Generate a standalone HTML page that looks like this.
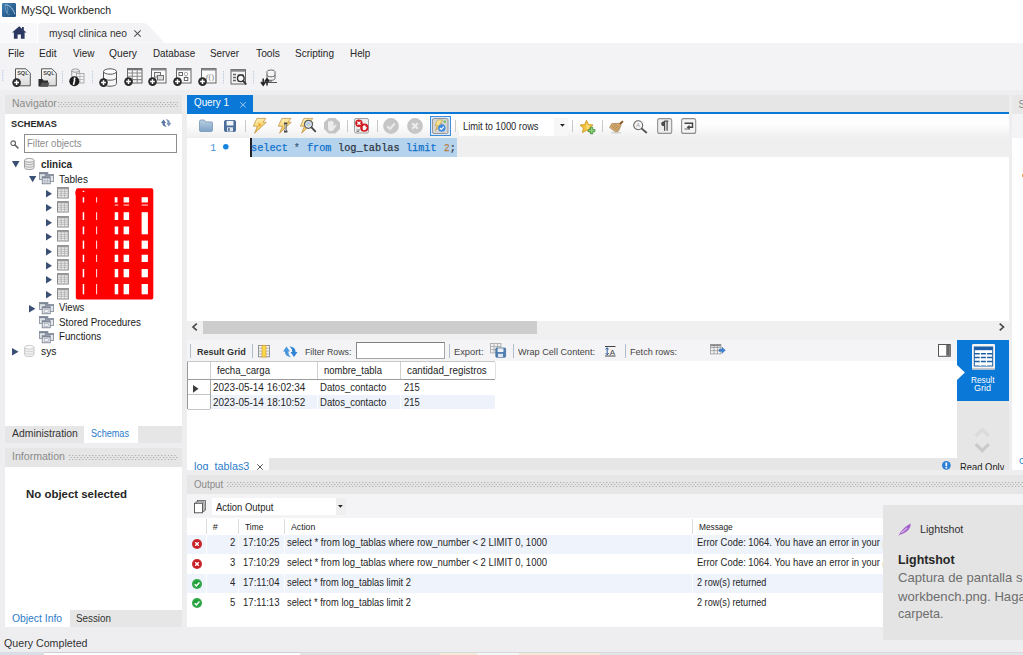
<!DOCTYPE html>
<html>
<head>
<meta charset="utf-8">
<title>MySQL Workbench</title>
<style>
*{box-sizing:border-box;margin:0;padding:0}
html,body{width:1023px;height:655px;overflow:hidden;background:#fff}
body{position:relative;font-family:"Liberation Sans",sans-serif;font-size:11px;color:#1a1a1a}
.a{position:absolute}
.t{position:absolute;white-space:pre;line-height:20px;transform-origin:0 0}
svg{position:absolute;overflow:visible}
.dots{position:absolute;background-image:radial-gradient(circle at 0.6px 0.6px,#a6a6a6 0.45px,transparent 0.75px),radial-gradient(circle at 0.6px 0.6px,#a6a6a6 0.45px,transparent 0.75px);background-size:3.3px 4px;background-position:0 0,1.65px 2px}
</style>
</head>
<body>
<div class="a" style="left:0px;top:0px;width:1023px;height:23.4px;background:#fff;"></div>
<svg style="left:2px;top:3px" width="14" height="14" viewBox="0 0 14 14"><defs><linearGradient id="lg1" x1="0" y1="0" x2="1" y2="1"><stop offset="0" stop-color="#3c7fb3"/><stop offset="1" stop-color="#1f4f7c"/></linearGradient></defs><rect x="0" y="0" width="14" height="14" rx="1.2" fill="url(#lg1)"/><path d="M3.300 1.700C8 2 11.200 6 12.900 11.300" fill="none" stroke="#c3d6e6" stroke-width="1" stroke-opacity=".85"/><path d="M3.300 1.700C2.800 4.500 3.500 7.500 5 10C5.600 11.300 6.800 12 7.600 11.300M5.200 3.500C6 5.500 6 8 5 10" fill="none" stroke="#aac4da" stroke-width=".8" stroke-opacity=".6"/></svg>
<div class="a" style="left:0px;top:23.4px;width:1023px;height:19.6px;background:#fff;"></div>
<svg style="left:0px;top:23.4px" width="170" height="19.6" viewBox="0 0 170 19.6"><path d="M0 0H33.500Q37 0 37 3.500V19.600H0Z" fill="#f8f8fa"/><path d="M38 19.600V3.500Q38 0 41.500 0H143Q146 0 147.800 1.800L164.500 19.600Z" fill="#f3f3f5"/></svg>
<svg style="left:11.5px;top:25.6px" width="14.5" height="12.8" viewBox="0 0 14.5 12.8"><path d="M7.250 0.300L0 6.600H1.900V12.800H5.600V8.400H8.900V12.800H12.600V6.600H14.500L11.800 4.200V1H10V2.700Z" fill="#2a3760"/></svg>
<svg style="left:134px;top:30.4px" width="7" height="7" viewBox="0 0 7 7"><path d="M0.300 0.300L6.700 6.700M6.700 0.300L0.300 6.700" stroke="#555" stroke-width="1.100" fill="none"/></svg>
<div class="a" style="left:0px;top:43px;width:1023px;height:47.3px;background:#f3f3f5;"></div>
<div class="a" style="left:0px;top:90.3px;width:1023px;height:564.7px;background:#eeeef1;"></div>
<svg style="left:2.2px;top:70px" width="2" height="12" viewBox="0 0 2 12"><rect x="0" y="0" width="1.300" height="1.200" fill="#b9cde6"/><rect x="0" y="2.4" width="1.300" height="1.200" fill="#b9cde6"/><rect x="0" y="4.8" width="1.300" height="1.200" fill="#b9cde6"/><rect x="0" y="7.2" width="1.300" height="1.200" fill="#b9cde6"/><rect x="0" y="9.6" width="1.300" height="1.200" fill="#b9cde6"/></svg>
<svg style="left:12px;top:67.5px" width="19" height="19" viewBox="0 0 19 19"><defs><linearGradient id="dg" x1="0" y1="0" x2="0" y2="1"><stop offset="0" stop-color="#fdfdfd"/><stop offset="1" stop-color="#d9d9d9"/></linearGradient></defs><path d="M3.500 .8H14L18.300 5.200V17.800H3.500Z" fill="url(#dg)" stroke="#555" stroke-width="1"/><text x="5.200" y="7" font-size="5.500" font-weight="bold" fill="#444" font-family="Liberation Sans">SQL</text><circle cx="4.6" cy="14.6" r="4.3" fill="#2b2b2b"/><path d="M2.1999999999999997 14.6H7.0M4.6 12.2V17.0" stroke="#fff" stroke-width="1.500"/></svg>
<svg style="left:38px;top:67.5px" width="19" height="19" viewBox="0 0 19 19"><path d="M3.500 .8H14L18.300 5.200V17.800H3.500Z" fill="url(#dg)" stroke="#555" stroke-width="1"/><text x="5.200" y="7" font-size="5.500" font-weight="bold" fill="#444" font-family="Liberation Sans">SQL</text><path d="M0.500 18.500V11H4.500L5.500 12.500H10V18.500Z" fill="#2b2b2b"/><path d="M2 18.500L3.500 14.500H11.500L10 18.500Z" fill="#555"/></svg>
<svg style="left:62.3px;top:71px" width="1" height="12" viewBox="0 0 1 12"><rect x="0" y="0" width="1" height="1.200" fill="#b9c9dd"/><rect x="0" y="2.2" width="1" height="1.200" fill="#b9c9dd"/><rect x="0" y="4.4" width="1" height="1.200" fill="#b9c9dd"/><rect x="0" y="6.6" width="1" height="1.200" fill="#b9c9dd"/><rect x="0" y="8.8" width="1" height="1.200" fill="#b9c9dd"/><rect x="0" y="11" width="1" height="1.200" fill="#b9c9dd"/></svg>
<svg style="left:69px;top:67.5px" width="16" height="19" viewBox="0 0 16 19"><ellipse cx="6.500" cy="2.600" rx="3.800" ry="1.700" fill="#e8e8e8" stroke="#8a8a8a" stroke-width=".8"/><path d="M2.700 2.600V8.500M10.300 2.600V8.500" stroke="#8a8a8a" stroke-width=".8"/><rect x="7.500" y="5.500" width="7.500" height="9.500" fill="#f4f4f4" stroke="#9a9a9a" stroke-width=".8"/><path d="M7.500 8.500H15M7.500 11.500H15M11 5.500V15" stroke="#aaa" stroke-width=".7"/><circle cx="5.300" cy="13.300" r="5" fill="#1f1f1f"/><path d="M5.800 10.200l-.5 1.200M5.600 12.300l-1 4" stroke="#fff" stroke-width="1.600" stroke-linecap="round"/></svg>
<svg style="left:92px;top:71px" width="1" height="12" viewBox="0 0 1 12"><rect x="0" y="0" width="1" height="1.200" fill="#b9c9dd"/><rect x="0" y="2.2" width="1" height="1.200" fill="#b9c9dd"/><rect x="0" y="4.4" width="1" height="1.200" fill="#b9c9dd"/><rect x="0" y="6.6" width="1" height="1.200" fill="#b9c9dd"/><rect x="0" y="8.8" width="1" height="1.200" fill="#b9c9dd"/><rect x="0" y="11" width="1" height="1.200" fill="#b9c9dd"/></svg>
<svg style="left:98.5px;top:67.5px" width="19" height="19" viewBox="0 0 19 19"><path d="M4.500 3.500V15.500C4.500 17.200 7.500 18.200 11 18.200S17.500 17.200 17.500 15.500V3.500" fill="#f6f6f6" stroke="#555" stroke-width="1"/><ellipse cx="11" cy="3.500" rx="6.500" ry="2.700" fill="#fff" stroke="#555" stroke-width="1"/><path d="M4.500 9.500C4.500 11.200 7.500 12.200 11 12.200S17.500 11.200 17.500 9.500" fill="none" stroke="#555" stroke-width="1"/><circle cx="4.5" cy="14.6" r="4.3" fill="#2b2b2b"/><path d="M2.1 14.6H6.9M4.5 12.2V17.0" stroke="#fff" stroke-width="1.500"/></svg>
<svg style="left:123.6px;top:67.2px" width="19" height="19" viewBox="0 0 19 19"><rect x="3.500" y="1.500" width="14.500" height="14.500" fill="#fafafa" stroke="#666" stroke-width="1"/><rect x="3.500" y="1.500" width="14.500" height="1.800" fill="#777"/><path d="M3.500 6H18M3.500 9.300H18M3.500 12.600H18M8.300 3.300V16M13.200 3.300V16" stroke="#8a8a8a" stroke-width="1.100"/><circle cx="4.5" cy="14.6" r="4.3" fill="#2b2b2b"/><path d="M2.1 14.6H6.9M4.5 12.2V17.0" stroke="#fff" stroke-width="1.500"/></svg>
<svg style="left:147.9px;top:67.2px" width="19" height="19" viewBox="0 0 19 19"><rect x="3.500" y="1.500" width="14.500" height="14.500" fill="#fafafa" stroke="#666" stroke-width="1"/><rect x="3.500" y="1.500" width="14.500" height="2" fill="#888"/><rect x="6.500" y="5.500" width="6" height="4.500" fill="#eee" stroke="#666" stroke-width=".9"/><rect x="9.500" y="8.500" width="6" height="4.500" fill="#ddd" stroke="#666" stroke-width=".9"/><circle cx="4.5" cy="14.6" r="4.3" fill="#2b2b2b"/><path d="M2.1 14.6H6.9M4.5 12.2V17.0" stroke="#fff" stroke-width="1.500"/></svg>
<svg style="left:172.9px;top:67.2px" width="19" height="19" viewBox="0 0 19 19"><rect x="3.500" y="1.500" width="14.500" height="14.500" fill="#fafafa" stroke="#666" stroke-width="1"/><rect x="3.500" y="1.500" width="14.500" height="2" fill="#888"/><rect x="6" y="5.500" width="3.500" height="3" fill="#fff" stroke="#555" stroke-width=".9"/><circle cx="13" cy="7" r="1.700" fill="#fff" stroke="#999" stroke-width=".8"/><rect x="11.300" y="10.500" width="3.500" height="3" fill="#fff" stroke="#555" stroke-width=".9"/><path d="M13 8.700V10.500" stroke="#999" stroke-width=".7"/><circle cx="4.5" cy="14.6" r="4.3" fill="#2b2b2b"/><path d="M2.1 14.6H6.9M4.5 12.2V17.0" stroke="#fff" stroke-width="1.500"/></svg>
<svg style="left:197.9px;top:67.2px" width="19" height="19" viewBox="0 0 19 19"><rect x="3.500" y="1.500" width="14.500" height="14.500" fill="#fafafa" stroke="#666" stroke-width="1"/><rect x="3.500" y="1.500" width="14.500" height="2" fill="#888"/><text x="7.500" y="13" font-size="9" fill="#858585" font-family="Liberation Serif" font-style="italic">f</text><text x="10.500" y="13" font-size="8.500" fill="#858585" font-family="Liberation Serif">()</text><circle cx="4.5" cy="14.6" r="4.3" fill="#2b2b2b"/><path d="M2.1 14.6H6.9M4.5 12.2V17.0" stroke="#fff" stroke-width="1.500"/></svg>
<svg style="left:223.2px;top:71px" width="1" height="12" viewBox="0 0 1 12"><rect x="0" y="0" width="1" height="1.200" fill="#b9c9dd"/><rect x="0" y="2.2" width="1" height="1.200" fill="#b9c9dd"/><rect x="0" y="4.4" width="1" height="1.200" fill="#b9c9dd"/><rect x="0" y="6.6" width="1" height="1.200" fill="#b9c9dd"/><rect x="0" y="8.8" width="1" height="1.200" fill="#b9c9dd"/><rect x="0" y="11" width="1" height="1.200" fill="#b9c9dd"/></svg>
<svg style="left:229.5px;top:67.5px" width="18" height="19" viewBox="0 0 18 19"><rect x="1" y="1.500" width="14.500" height="14.500" fill="#f4f4f4" stroke="#666" stroke-width="1"/><rect x="1" y="1.500" width="14.500" height="2.200" fill="#888"/><path d="M3 6.500H6M3 9.500H6M3 12.500H6" stroke="#666" stroke-width="1.300"/><path d="M7.500 6.500H14M7.500 13.500H9" stroke="#aaa" stroke-width="1"/><circle cx="10.800" cy="10.300" r="3.300" fill="#f8f8f8" stroke="#333" stroke-width="1.400"/><path d="M13.200 12.800L15.800 15.800" stroke="#333" stroke-width="1.800" stroke-linecap="round"/></svg>
<svg style="left:253.4px;top:71px" width="1" height="12" viewBox="0 0 1 12"><rect x="0" y="0" width="1" height="1.200" fill="#b9c9dd"/><rect x="0" y="2.2" width="1" height="1.200" fill="#b9c9dd"/><rect x="0" y="4.4" width="1" height="1.200" fill="#b9c9dd"/><rect x="0" y="6.6" width="1" height="1.200" fill="#b9c9dd"/><rect x="0" y="8.8" width="1" height="1.200" fill="#b9c9dd"/><rect x="0" y="11" width="1" height="1.200" fill="#b9c9dd"/></svg>
<svg style="left:259.5px;top:68.5px" width="18" height="18" viewBox="0 0 18 18"><ellipse cx="11" cy="2.800" rx="4" ry="1.800" fill="#fff" stroke="#555" stroke-width=".9"/><path d="M7 2.800V9.500C7 10.600 8.800 11.300 11 11.300S15 10.600 15 9.500V2.800" fill="#f4f4f4" stroke="#555" stroke-width=".9"/><path d="M7 6C7 7.100 8.800 7.800 11 7.800S15 7.100 15 6" fill="none" stroke="#555" stroke-width=".9"/><path d="M11 11.300V13.500M5 13.500H17" stroke="#555" stroke-width="1"/><path d="M3.200 9.500V15.500M1 13L3.200 16.200 5.400 13M7 16.500V10.500M4.800 12.800L7 9.800 9.200 12.800" stroke="#222" stroke-width="1.500" fill="none"/></svg>
<div class="a" style="left:5px;top:95px;width:177px;height:19px;background:#e6e6e6;"></div>
<div class="dots" style="left:58px;top:102.200px;width:120px;height:5px"></div>
<div class="a" style="left:5px;top:114px;width:177px;height:311.7px;background:#fff;"></div>
<svg style="left:160.7px;top:118.6px" width="10.3" height="8" viewBox="0 0 10.3 8"><path d="M0 3.900L2.500 .4 5 3.900H3.700Q3.700 6.300 5.700 7.900Q1.400 7.300 1.300 3.900Z" fill="#5875a3"/><path d="M10.300 4.100L7.800 7.600 5.300 4.100H6.600Q6.600 1.700 4.600 .1Q8.900 .7 9 4.100Z" fill="#7d95bb"/></svg>
<div class="a" style="left:24.3px;top:134px;width:152.4px;height:19px;background:#fff;border:1px solid #8d8d8d;"></div>
<svg style="left:10.2px;top:139.6px" width="8.5" height="8.5" viewBox="0 0 8.5 8.5"><circle cx="3.200" cy="3.200" r="2.300" fill="none" stroke="#666" stroke-width="1.200"/><path d="M5 5L7.900 7.900" stroke="#666" stroke-width="1.600" stroke-linecap="round"/></svg>
<svg style="left:11.9px;top:161.2px" width="7.5" height="6.5" viewBox="0 0 7.5 6.5"><path d="M0 0H7.5L3.75 6.5Z" fill="#3a4f74"/></svg>
<svg style="left:24px;top:158.3px" width="10.5" height="12" viewBox="0 0 10.5 12"><g opacity="1"><path d="M.5 2.300V9.700C.5 10.800 2.600 11.600 5.250 11.600S10 10.800 10 9.700V2.300" fill="#e9e9e9" stroke="#8c8c8c" stroke-width=".8"/><ellipse cx="5.250" cy="2.300" rx="4.750" ry="1.900" fill="#f6f6f6" stroke="#8c8c8c" stroke-width=".8"/><path d="M.5 4.800C.5 5.900 2.600 6.700 5.250 6.700S10 5.900 10 4.800M.5 7.300C.5 8.400 2.600 9.200 5.250 9.200S10 8.400 10 7.300" fill="none" stroke="#9a9a9a" stroke-width=".8"/></g></svg>
<svg style="left:29px;top:176px" width="7.3" height="6.3" viewBox="0 0 7.3 6.3"><path d="M0 0H7.3L3.65 6.3Z" fill="#3a4f74"/></svg>
<svg style="left:39px;top:172px" width="15" height="12" viewBox="0 0 15 12"><rect x=".4" y=".4" width="8.500" height="7" fill="#dfe3ea" stroke="#7e8796" stroke-width=".8"/><rect x=".4" y=".4" width="8.500" height="1.800" fill="#7e8796"/><rect x="6.300" y="2.400" width="8.300" height="7" fill="#e4e7ec" stroke="#7e8796" stroke-width=".8"/><rect x="6.300" y="2.400" width="8.300" height="1.600" fill="#8a93a3"/><rect x="3.200" y="4.800" width="8" height="7" fill="#eef0f3" stroke="#6f7787" stroke-width=".8"/><rect x="3.200" y="4.800" width="8" height="1.600" fill="#7e8796"/><path d="M3.200 8.300H11.200M3.200 10H11.200M5.900 6.400V11.800M8.600 6.400V11.800" stroke="#9aa1ae" stroke-width=".6"/></svg>
<svg style="left:46.3px;top:189.9px" width="6" height="7.4" viewBox="0 0 6 7.4"><path d="M0 0L6 3.7L0 7.4Z" fill="#3a4f74"/></svg>
<svg style="left:57px;top:186.95px" width="11.8" height="11.5" viewBox="0 0 11.8 11.5"><rect x=".5" y=".5" width="10.800" height="10.500" fill="#ececec" stroke="#8b8b8b" stroke-width="1"/><rect x=".5" y=".5" width="10.800" height="1.800" fill="#9a9a9a"/><path d="M1 4.300H11M1 6.300H11M1 8.300H11M4.200 2.300V10.500M7.600 2.300V10.500" stroke="#a9a9a9" stroke-width=".7"/></svg>
<svg style="left:46.3px;top:204.2px" width="6" height="7.4" viewBox="0 0 6 7.4"><path d="M0 0L6 3.7L0 7.4Z" fill="#3a4f74"/></svg>
<svg style="left:57px;top:201.25px" width="11.8" height="11.5" viewBox="0 0 11.8 11.5"><rect x=".5" y=".5" width="10.800" height="10.500" fill="#ececec" stroke="#8b8b8b" stroke-width="1"/><rect x=".5" y=".5" width="10.800" height="1.800" fill="#9a9a9a"/><path d="M1 4.300H11M1 6.300H11M1 8.300H11M4.200 2.300V10.500M7.600 2.300V10.500" stroke="#a9a9a9" stroke-width=".7"/></svg>
<svg style="left:46.3px;top:218.7px" width="6" height="7.4" viewBox="0 0 6 7.4"><path d="M0 0L6 3.7L0 7.4Z" fill="#3a4f74"/></svg>
<svg style="left:57px;top:215.75px" width="11.8" height="11.5" viewBox="0 0 11.8 11.5"><rect x=".5" y=".5" width="10.800" height="10.500" fill="#ececec" stroke="#8b8b8b" stroke-width="1"/><rect x=".5" y=".5" width="10.800" height="1.800" fill="#9a9a9a"/><path d="M1 4.300H11M1 6.300H11M1 8.300H11M4.200 2.300V10.500M7.600 2.300V10.500" stroke="#a9a9a9" stroke-width=".7"/></svg>
<svg style="left:46.3px;top:233.2px" width="6" height="7.4" viewBox="0 0 6 7.4"><path d="M0 0L6 3.7L0 7.4Z" fill="#3a4f74"/></svg>
<svg style="left:57px;top:230.25px" width="11.8" height="11.5" viewBox="0 0 11.8 11.5"><rect x=".5" y=".5" width="10.800" height="10.500" fill="#ececec" stroke="#8b8b8b" stroke-width="1"/><rect x=".5" y=".5" width="10.800" height="1.800" fill="#9a9a9a"/><path d="M1 4.300H11M1 6.300H11M1 8.300H11M4.200 2.300V10.500M7.600 2.300V10.500" stroke="#a9a9a9" stroke-width=".7"/></svg>
<svg style="left:46.3px;top:247.7px" width="6" height="7.4" viewBox="0 0 6 7.4"><path d="M0 0L6 3.7L0 7.4Z" fill="#3a4f74"/></svg>
<svg style="left:57px;top:244.75px" width="11.8" height="11.5" viewBox="0 0 11.8 11.5"><rect x=".5" y=".5" width="10.800" height="10.500" fill="#ececec" stroke="#8b8b8b" stroke-width="1"/><rect x=".5" y=".5" width="10.800" height="1.800" fill="#9a9a9a"/><path d="M1 4.300H11M1 6.300H11M1 8.300H11M4.200 2.300V10.500M7.600 2.300V10.500" stroke="#a9a9a9" stroke-width=".7"/></svg>
<svg style="left:46.3px;top:261.8px" width="6" height="7.4" viewBox="0 0 6 7.4"><path d="M0 0L6 3.7L0 7.4Z" fill="#3a4f74"/></svg>
<svg style="left:57px;top:258.85px" width="11.8" height="11.5" viewBox="0 0 11.8 11.5"><rect x=".5" y=".5" width="10.800" height="10.500" fill="#ececec" stroke="#8b8b8b" stroke-width="1"/><rect x=".5" y=".5" width="10.800" height="1.800" fill="#9a9a9a"/><path d="M1 4.300H11M1 6.300H11M1 8.300H11M4.200 2.300V10.500M7.600 2.300V10.500" stroke="#a9a9a9" stroke-width=".7"/></svg>
<svg style="left:46.3px;top:276.2px" width="6" height="7.4" viewBox="0 0 6 7.4"><path d="M0 0L6 3.7L0 7.4Z" fill="#3a4f74"/></svg>
<svg style="left:57px;top:273.25px" width="11.8" height="11.5" viewBox="0 0 11.8 11.5"><rect x=".5" y=".5" width="10.800" height="10.500" fill="#ececec" stroke="#8b8b8b" stroke-width="1"/><rect x=".5" y=".5" width="10.800" height="1.800" fill="#9a9a9a"/><path d="M1 4.300H11M1 6.300H11M1 8.300H11M4.200 2.300V10.500M7.600 2.300V10.500" stroke="#a9a9a9" stroke-width=".7"/></svg>
<svg style="left:46.3px;top:290.7px" width="6" height="7.4" viewBox="0 0 6 7.4"><path d="M0 0L6 3.7L0 7.4Z" fill="#3a4f74"/></svg>
<svg style="left:57px;top:287.75px" width="11.8" height="11.5" viewBox="0 0 11.8 11.5"><rect x=".5" y=".5" width="10.800" height="10.500" fill="#ececec" stroke="#8b8b8b" stroke-width="1"/><rect x=".5" y=".5" width="10.800" height="1.800" fill="#9a9a9a"/><path d="M1 4.300H11M1 6.300H11M1 8.300H11M4.200 2.300V10.500M7.600 2.300V10.500" stroke="#a9a9a9" stroke-width=".7"/></svg>
<svg style="left:0;top:0" width="200" height="320" viewBox="0 0 200 320"><path d="M78 188.200H151.500Q153.300 188.200 153.300 190V297.800Q153.300 299.600 151.500 299.600H78Q75.800 299.600 75.800 297.500V196Q74.800 192 75.800 190.500Q76 188.200 78 188.200Z" fill="#fe0000"/><rect x="82.7" y="197.2" width="1.50" height="5.30" fill="#fff"/><rect x="96.2" y="197.2" width="0.90" height="5.30" fill="#fff"/><rect x="114.7" y="197.2" width="2.80" height="5.30" fill="#fff"/><rect x="123.6" y="197.2" width="5.50" height="5.30" fill="#fff"/><rect x="141.6" y="197.2" width="6.30" height="5.30" fill="#fff"/><rect x="82.7" y="212.2" width="1.50" height="7.80" fill="#fff"/><rect x="96.2" y="212.2" width="0.90" height="7.80" fill="#fff"/><rect x="114.7" y="212.2" width="3.50" height="7.80" fill="#fff"/><rect x="123.6" y="212.2" width="5.50" height="7.80" fill="#fff"/><rect x="141.6" y="212.2" width="6.30" height="22.10" fill="#fff"/><rect x="82.7" y="226.5" width="1.50" height="7.80" fill="#fff"/><rect x="96.2" y="226.5" width="0.90" height="7.80" fill="#fff"/><rect x="114.7" y="226.5" width="3.50" height="7.80" fill="#fff"/><rect x="123.6" y="226.5" width="5.50" height="7.80" fill="#fff"/><rect x="82.7" y="240.6" width="1.50" height="8.20" fill="#fff"/><rect x="96.2" y="240.6" width="0.90" height="8.20" fill="#fff"/><rect x="114.7" y="240.6" width="3.50" height="8.20" fill="#fff"/><rect x="123.6" y="240.6" width="5.50" height="8.20" fill="#fff"/><rect x="141.6" y="240.6" width="6.30" height="8.20" fill="#fff"/><rect x="82.7" y="254.7" width="1.50" height="7.30" fill="#fff"/><rect x="96.2" y="254.7" width="0.90" height="7.30" fill="#fff"/><rect x="114.7" y="254.7" width="3.50" height="7.30" fill="#fff"/><rect x="123.6" y="254.7" width="5.50" height="7.30" fill="#fff"/><rect x="141.6" y="254.7" width="6.30" height="7.30" fill="#fff"/><rect x="82.7" y="269" width="1.50" height="8.30" fill="#fff"/><rect x="96.2" y="269" width="0.90" height="8.30" fill="#fff"/><rect x="114.7" y="269" width="3.50" height="8.30" fill="#fff"/><rect x="123.6" y="269" width="5.50" height="8.30" fill="#fff"/><rect x="141.6" y="269" width="6.30" height="8.30" fill="#fff"/><rect x="82.7" y="284" width="1.50" height="10.30" fill="#fff"/><rect x="96.2" y="284" width="0.90" height="10.30" fill="#fff"/><rect x="114.7" y="284" width="3.50" height="10.30" fill="#fff"/><rect x="123.6" y="284" width="5.50" height="10.30" fill="#fff"/><rect x="141.6" y="284" width="6.30" height="10.30" fill="#fff"/><rect x="114.7" y="204.600" width="3.50" height=".9" fill="#fff"/><rect x="123.6" y="204.600" width="5.50" height=".9" fill="#fff"/><rect x="141.6" y="204.600" width="6.30" height=".9" fill="#fff"/><rect x="82.700" y="190.800" width="1.600" height="1.200" fill="#fff"/></svg>
<svg style="left:29px;top:304.8px" width="6.4" height="7.4" viewBox="0 0 6.4 7.4"><path d="M0 0L6.4 3.7L0 7.4Z" fill="#3a4f74"/></svg>
<svg style="left:39px;top:302px" width="15" height="12" viewBox="0 0 15 12"><rect x=".4" y=".4" width="8.500" height="7" fill="#dfe3ea" stroke="#7e8796" stroke-width=".8"/><rect x=".4" y=".4" width="8.500" height="1.800" fill="#7e8796"/><rect x="6.300" y="2.400" width="8.300" height="7" fill="#e4e7ec" stroke="#7e8796" stroke-width=".8"/><rect x="6.300" y="2.400" width="8.300" height="1.600" fill="#8a93a3"/><rect x="3.200" y="4.800" width="8" height="7" fill="#eef0f3" stroke="#6f7787" stroke-width=".8"/><rect x="3.200" y="4.800" width="8" height="1.600" fill="#7e8796"/><rect x="5.200" y="7.600" width="4" height="2.800" fill="none" stroke="#9aa1ae" stroke-width=".6"/></svg>
<svg style="left:39px;top:316.4px" width="15" height="12" viewBox="0 0 15 12"><rect x=".4" y=".4" width="8.500" height="7" fill="#dfe3ea" stroke="#7e8796" stroke-width=".8"/><rect x=".4" y=".4" width="8.500" height="1.800" fill="#7e8796"/><rect x="6.300" y="2.400" width="8.300" height="7" fill="#e4e7ec" stroke="#7e8796" stroke-width=".8"/><rect x="6.300" y="2.400" width="8.300" height="1.600" fill="#8a93a3"/><rect x="3.200" y="4.800" width="8" height="7" fill="#eef0f3" stroke="#6f7787" stroke-width=".8"/><rect x="3.200" y="4.800" width="8" height="1.600" fill="#7e8796"/><rect x="5.200" y="7.600" width="4" height="2.800" fill="none" stroke="#9aa1ae" stroke-width=".6"/></svg>
<svg style="left:39px;top:330.8px" width="15" height="12" viewBox="0 0 15 12"><rect x=".4" y=".4" width="8.500" height="7" fill="#dfe3ea" stroke="#7e8796" stroke-width=".8"/><rect x=".4" y=".4" width="8.500" height="1.800" fill="#7e8796"/><rect x="6.300" y="2.400" width="8.300" height="7" fill="#e4e7ec" stroke="#7e8796" stroke-width=".8"/><rect x="6.300" y="2.400" width="8.300" height="1.600" fill="#8a93a3"/><rect x="3.200" y="4.800" width="8" height="7" fill="#eef0f3" stroke="#6f7787" stroke-width=".8"/><rect x="3.200" y="4.800" width="8" height="1.600" fill="#7e8796"/><rect x="5.200" y="7.600" width="4" height="2.800" fill="none" stroke="#9aa1ae" stroke-width=".6"/></svg>
<svg style="left:11.9px;top:347.8px" width="6.6" height="7.4" viewBox="0 0 6.6 7.4"><path d="M0 0L6.6 3.7L0 7.4Z" fill="#3a4f74"/></svg>
<svg style="left:24px;top:344.5px" width="10.5" height="12" viewBox="0 0 10.5 12"><g opacity="0.55"><path d="M.5 2.300V9.700C.5 10.800 2.600 11.600 5.250 11.600S10 10.800 10 9.700V2.300" fill="#e9e9e9" stroke="#8c8c8c" stroke-width=".8"/><ellipse cx="5.250" cy="2.300" rx="4.750" ry="1.900" fill="#f6f6f6" stroke="#8c8c8c" stroke-width=".8"/><path d="M.5 4.800C.5 5.900 2.600 6.700 5.250 6.700S10 5.900 10 4.800M.5 7.300C.5 8.400 2.600 9.200 5.250 9.200S10 8.400 10 7.300" fill="none" stroke="#9a9a9a" stroke-width=".8"/></g></svg>
<div class="a" style="left:5px;top:425.7px;width:177px;height:16.9px;background:#e6e6e6;"></div>
<div class="a" style="left:84.3px;top:425.7px;width:53.7px;height:16.9px;background:#fff;"></div>
<div class="a" style="left:5px;top:448.2px;width:177px;height:18.4px;background:#e6e6e6;"></div>
<div class="dots" style="left:69px;top:454.800px;width:109px;height:5.200px"></div>
<div class="a" style="left:5px;top:466.6px;width:177px;height:143.2px;background:#fff;"></div>
<div class="a" style="left:5px;top:609.8px;width:177px;height:16.9px;background:#e6e6e6;"></div>
<div class="a" style="left:5px;top:609.8px;width:65px;height:16.9px;background:#fff;"></div>
<div class="a" style="left:187.3px;top:95px;width:821.3px;height:17.5px;background:#e6e6e6;"></div>
<div class="a" style="left:187.3px;top:95px;width:65.4px;height:17.5px;background:#0a78d6;"></div>
<div class="a" style="left:187.3px;top:112px;width:821.3px;height:1.7px;background:#0a78d6;"></div>
<svg style="left:240px;top:101.6px" width="6" height="5.7" viewBox="0 0 6 5.7"><path d="M.2 .2L5.800 5.500M5.800 .2L.2 5.500" stroke="#9cc9f0" stroke-width="1" fill="none"/></svg>
<div class="a" style="left:187.3px;top:113.7px;width:821.3px;height:24px;background:linear-gradient(#fff 0%,#fdfdfd 45%,#efefef 100%);"></div>
<div class="a" style="left:187.3px;top:137.7px;width:821.3px;height:183.3px;background:#fff;"></div>
<div class="a" style="left:457px;top:137.9px;width:551.6px;height:18.7px;background:#efefef;"></div>
<div class="a" style="left:251.5px;top:137.9px;width:205.5px;height:18.8px;background:#b5d3ec;"></div>
<div class="a" style="left:250px;top:138px;width:1.5px;height:18.8px;background:#222;"></div>
<svg style="left:223px;top:144.2px" width="5.6" height="5.6" viewBox="0 0 5.6 5.6"><circle cx="2.800" cy="2.800" r="2.800" fill="#1583e0"/></svg>
<div class="a" style="left:187.3px;top:321px;width:821.3px;height:19px;background:#f0f0f0;"></div>
<div class="a" style="left:202.5px;top:321.3px;width:334.2px;height:12.5px;background:#cdcdcd;"></div>
<svg style="left:191.6px;top:323px" width="5.5" height="8" viewBox="0 0 5.5 8"><path d="M4.800 .6L1 4L4.800 7.400" stroke="#444" stroke-width="1.600" fill="none"/></svg>
<svg style="left:998.6px;top:323px" width="5.5" height="8" viewBox="0 0 5.5 8"><path d="M.7 .6L4.500 4L.7 7.400" stroke="#444" stroke-width="1.600" fill="none"/></svg>
<svg style="left:199px;top:119px" width="14" height="13" viewBox="0 0 14 13"><defs><linearGradient id="fg" x1="0" y1="0" x2="0" y2="1"><stop offset="0" stop-color="#b9cfe4"/><stop offset="1" stop-color="#7fa3c6"/></linearGradient></defs><path d="M.5 2.500Q.5 1 2 1H4.800Q5.800 1 6.200 2L6.600 2.900H12.300Q13.500 2.900 13.500 4.100V11.300Q13.500 12.500 12.300 12.500H1.700Q.5 12.500 .5 11.300Z" fill="url(#fg)" stroke="#7795b5" stroke-width=".8"/></svg>
<svg style="left:224px;top:120px" width="12" height="12" viewBox="0 0 12 12"><rect x=".5" y=".5" width="11" height="11" rx="1" fill="#4a6f9e" stroke="#3a5a86" stroke-width=".8"/><rect x="2.600" y=".9" width="6.800" height="4.600" fill="#f1f4f8"/><rect x="3" y="7.300" width="6" height="4.200" fill="#dfe6ee"/><rect x="4" y="8.200" width="1.800" height="2.600" fill="#4a6f9e"/></svg>
<div class="a" style="left:244.9px;top:120px;width:1px;height:11.5px;background:#c9c9c9;"></div>
<svg style="left:253px;top:118px" width="14" height="15.5" viewBox="0 0 14 15.5"><defs><linearGradient id="bg1" x1="0" y1="0" x2="0.300" y2="1"><stop offset="0" stop-color="#fdf3c4"/><stop offset=".45" stop-color="#f8df87"/><stop offset="1" stop-color="#e9b93e"/></linearGradient></defs><path d="M3.900 .400H12.800L10 4.300H13.300L1.600 15.200 4.400 8.200H.300Z" fill="url(#bg1)" stroke="#c4964a" stroke-width=".8" stroke-linejoin="round"/><path d="M5.600 4.600L8.600 6.800 5.600 9Z" fill="#f0a52e"/></svg>
<svg style="left:277.5px;top:118px" width="14" height="15.5" viewBox="0 0 14 15.5"><defs><linearGradient id="bg1" x1="0" y1="0" x2="0.300" y2="1"><stop offset="0" stop-color="#fdf3c4"/><stop offset=".45" stop-color="#f8df87"/><stop offset="1" stop-color="#e9b93e"/></linearGradient></defs><path d="M3.900 .400H12.800L10 4.300H13.300L1.600 15.200 4.400 8.200H.300Z" fill="url(#bg1)" stroke="#c4964a" stroke-width=".8" stroke-linejoin="round"/><path d="M6 5.500H9.400M7.700 5.500V13.500M6 13.500H9.400" stroke="#444" stroke-width="1.900" fill="none"/><path d="M7.700 6V13" stroke="#eee" stroke-width=".8"/></svg>
<svg style="left:299.5px;top:118px" width="16" height="15.5" viewBox="0 0 16 15.5"><defs><linearGradient id="bg1" x1="0" y1="0" x2="0.300" y2="1"><stop offset="0" stop-color="#fdf3c4"/><stop offset=".45" stop-color="#f8df87"/><stop offset="1" stop-color="#e9b93e"/></linearGradient></defs><path d="M3.900 .400H12.800L10 4.300H13.300L1.600 15.200 4.400 8.200H.300Z" fill="url(#bg1)" stroke="#c4964a" stroke-width=".8" stroke-linejoin="round"/><circle cx="8.500" cy="6.300" r="4" fill="#e4eef8" fill-opacity=".9" stroke="#5a5a5a" stroke-width="1.200"/><circle cx="8.500" cy="6.300" r="2.300" fill="#a9c8ea"/><circle cx="8.800" cy="7" r="1" fill="#f3e3a0"/><path d="M11.500 9.400L15.300 13.300" stroke="#4a4a4a" stroke-width="1.900" stroke-linecap="round"/></svg>
<svg style="left:324px;top:118px" width="16" height="15.5" viewBox="0 0 16 15.5"><path d="M4.700 0H11.300L16 4.600V10.900L11.300 15.500H4.700L0 10.900V4.600Z" fill="#c4c4c4"/><path d="M4 4.200Q4 3.300 4.700 3.300T5.400 4.200V3.600Q5.400 2.700 6.100 2.700T6.800 3.600V3.500Q6.800 2.600 7.500 2.600T8.200 3.500V4.200Q8.200 3.400 8.900 3.400T9.600 4.200V8.500L11.300 6.800Q12 6.200 12.500 6.700T12.300 7.900L9.800 11.500Q8.800 13.300 7 13.300Q4 13.300 4 10Z" fill="#ececec"/></svg>
<div class="a" style="left:347px;top:120px;width:1px;height:11.5px;background:#c9c9c9;"></div>
<svg style="left:354px;top:118px" width="15" height="15.5" viewBox="0 0 15 15.5"><rect x=".5" y=".5" width="14" height="14.500" rx="1.500" fill="#ededed" stroke="#999" stroke-width=".9"/><path d="M2.500 12H6M2.500 13.500H5" stroke="#666" stroke-width=".8"/><circle cx="4.900" cy="5.200" r="3.700" fill="#cf1a20"/><path d="M3.300 3.600L6.500 6.800M6.500 3.600L3.300 6.800" stroke="#fff" stroke-width="1.300"/><circle cx="10.300" cy="9.700" r="4.100" fill="#cf1a20"/><path d="M8.700 9.800V8.300Q8.700 7.700 9.200 7.700T9.700 8.300V7.600Q9.700 7 10.200 7T10.700 7.600V8Q10.700 7.400 11.200 7.400T11.700 8V9.500L12.300 9Q12.900 8.700 13 9.300L11.800 11.500Q11.300 12.300 10.300 12.300Q8.700 12.300 8.700 10.800Z" fill="#fff"/></svg>
<div class="a" style="left:376.8px;top:120px;width:1px;height:11.5px;background:#c9c9c9;"></div>
<svg style="left:383px;top:118px" width="16" height="16" viewBox="0 0 16 16"><circle cx="8" cy="8" r="7.900" fill="#c6c6c6"/><path d="M4.300 8.300L7 10.900 11.800 5.600" stroke="#e9e9e9" stroke-width="2.200" fill="none"/></svg>
<svg style="left:407.2px;top:118px" width="16" height="16" viewBox="0 0 16 16"><circle cx="8" cy="8" r="7.900" fill="#c6c6c6"/><path d="M5.200 5.200L10.800 10.800M10.800 5.200L5.200 10.800" stroke="#ececec" stroke-width="2.200" fill="none"/></svg>
<div class="a" style="left:430px;top:116px;width:20.6px;height:19.8px;background:#dbe9f8;border:1px solid #3e8ddd;"></div>
<svg style="left:432px;top:118px" width="16.5" height="16" viewBox="0 0 16.5 16"><rect x=".5" y=".5" width="15.500" height="15" rx="1.500" fill="#d5d5d5" stroke="#8d8d8d" stroke-width=".9"/><defs><linearGradient id="bg1" x1="0" y1="0" x2="0.300" y2="1"><stop offset="0" stop-color="#fdf3c4"/><stop offset=".45" stop-color="#f8df87"/><stop offset="1" stop-color="#e9b93e"/></linearGradient></defs><path d="M5.500 2H10.500L8 5.800H10.400L3.500 12.500 5.400 7.600H3Z" fill="url(#bg1)" stroke="#b98a2a" stroke-width=".5"/><circle cx="9.800" cy="10" r="3.700" fill="#3f8be0"/><path d="M7.900 10L9.400 11.500 11.800 8.600" stroke="#fff" stroke-width="1.100" fill="none"/><circle cx="12.800" cy="3.600" r="1.200" fill="#5fbf4a"/></svg>
<div class="a" style="left:454.9px;top:120px;width:1px;height:11.5px;background:#c9c9c9;"></div>
<div class="a" style="left:459.4px;top:117px;width:108.4px;height:19px;background:#fff;"></div>
<div class="a" style="left:554px;top:117.5px;width:13.8px;height:18px;background:#f7f7f7;"></div>
<svg style="left:560px;top:124.4px" width="4.8" height="2.8" viewBox="0 0 4.8 2.8"><path d="M0 0H4.800L2.400 2.800Z" fill="#222"/></svg>
<div class="a" style="left:572px;top:120px;width:1px;height:11.5px;background:#c9c9c9;"></div>
<svg style="left:580px;top:120px" width="15.5" height="14.5" viewBox="0 0 15.5 14.5"><path d="M6.500 .3L8.400 4.500 13 5 9.600 8.100 10.600 12.600 6.500 10.300 2.400 12.600 3.400 8.100 0 5 4.600 4.500Z" fill="#f3c23c" stroke="#c8901c" stroke-width=".8" stroke-linejoin="round"/><path d="M6.500 2.800L7.600 5.500 10.300 5.800 8.300 7.500 8.900 10 6.500 8.700Z" fill="#fbe08a"/><path d="M10.500 7.300H12.700V9.500H14.900V11.700H12.700V13.900H10.500V11.700H8.300V9.500H10.500Z" fill="#8ed27c" stroke="#3c8c38" stroke-width=".8" stroke-linejoin="round"/></svg>
<div class="a" style="left:602.1px;top:120px;width:1px;height:11.5px;background:#c9c9c9;"></div>
<svg style="left:609px;top:119.5px" width="15" height="13.5" viewBox="0 0 15 13.5"><path d="M9.500 3.800L13.300 .5 14.600 1.800 11.300 5.500Z" fill="#8a5a2c"/><path d="M2.800 3.500L10.300 3.300 12 5.300 9.500 11 7 12.200 .6 7.500Z" fill="#d5ad72" stroke="#9c7440" stroke-width=".6"/><path d="M2.500 6L8.500 10.500M4 4.800L9.800 9M6 4L10.700 7.500" stroke="#a67c46" stroke-width=".7"/><ellipse cx="7" cy="12.800" rx="5.500" ry=".7" fill="#ccc"/></svg>
<svg style="left:633px;top:120px" width="14.5" height="13.5" viewBox="0 0 14.5 13.5"><circle cx="5.200" cy="5.200" r="4.500" fill="#f4f4f4" stroke="#666" stroke-width="1.100"/><text x="3.300" y="7.300" font-size="5.500" fill="#999" font-family="Liberation Sans">A</text><path d="M8.700 8.600L13.300 12.500" stroke="#555" stroke-width="1.900" stroke-linecap="round"/></svg>
<svg style="left:656.5px;top:118px" width="15.3" height="16" viewBox="0 0 15.3 16"><rect x=".6" y=".6" width="14.100" height="14.800" rx="2" fill="#ececec" stroke="#939393" stroke-width="1.100"/><path d="M7.200 3.200H11.300M7.600 3.200V12.800M10.100 3.200V12.800" stroke="#4a4a4a" stroke-width="1.200" fill="none"/><path d="M7.600 3.200Q4.200 3.200 4.200 5.700T7.600 8.200Z" fill="#4a4a4a"/></svg>
<svg style="left:680.8px;top:118px" width="15.3" height="16" viewBox="0 0 15.3 16"><rect x=".6" y=".6" width="14.100" height="14.800" rx="2" fill="#f4f4f4" stroke="#8c8c8c" stroke-width="1.100"/><path d="M3.500 5.300H11.500V9.300H7.500" stroke="#444" stroke-width="1.400" fill="none"/><path d="M8.600 6.900L5.600 9.300 8.600 11.700Z" fill="#444"/><path d="M3.500 11H9" stroke="#666" stroke-width="1"/></svg>
<div class="a" style="left:187.3px;top:340px;width:769.45px;height:20.8px;background:#f4f4f6;"></div>
<div class="a" style="left:187.3px;top:360.8px;width:769.45px;height:97.2px;background:#fff;"></div>
<div class="a" style="left:187.3px;top:458px;width:769.45px;height:11.7px;background:#e6e6e6;"></div>
<div class="a" style="left:187.3px;top:458px;width:81.3px;height:11.7px;background:#fff;"></div>
<div class="a" style="left:956.75px;top:340px;width:51.85px;height:61.3px;background:#0a78d6;"></div>
<div class="a" style="left:956.75px;top:401.3px;width:51.85px;height:68.4px;background:#e6e6e6;"></div>
<svg style="left:956.75px;top:365.4px" width="8" height="15" viewBox="0 0 8 15"><path d="M0 0L7.900 7.500 0 15Z" fill="#fff"/></svg>
<svg style="left:971.8px;top:344.3px" width="23" height="25.5" viewBox="0 0 23 25.5"><rect x="0" y="0" width="23" height="25.500" rx="1.200" fill="#f4f4f4"/><rect x="0" y="24" width="23" height="1.500" fill="#c9c9c9"/><rect x="2.300" y="3" width="18.400" height="19" fill="#fff" stroke="#1a5fa8" stroke-width="1"/><rect x="2.300" y="3" width="18.400" height="3.200" fill="#1a5fa8"/><path d="M2.300 9.800H20.700M2.300 13.600H20.700M2.300 17.600H20.700" stroke="#1a5fa8" stroke-width="1.500"/><path d="M8.300 6V22M14.500 6V22" stroke="#fff" stroke-width="1.200"/></svg>
<svg style="left:938px;top:343.8px" width="12.8" height="12.8" viewBox="0 0 12.8 12.8"><rect x=".5" y=".5" width="11.800" height="11.800" fill="#fff" stroke="#555" stroke-width="1"/><rect x="8.200" y="1" width="3.600" height="10.800" fill="#666"/></svg>
<svg style="left:974px;top:427px" width="16.5" height="10" viewBox="0 0 16.5 10"><path d="M1.700 9L8.250 2.500 14.800 9" stroke="#dbdbdb" stroke-width="3.300" fill="none"/></svg>
<svg style="left:974px;top:443px" width="16.5" height="10.5" viewBox="0 0 16.5 10.5"><path d="M1.700 1.200L8.250 7.700 14.800 1.200" stroke="#cacaca" stroke-width="3.300" fill="none"/></svg>
<div class="a" style="left:189.6px;top:343.5px;width:1px;height:14px;background:#b3bdca;"></div>
<div class="a" style="left:251.5px;top:343.5px;width:1px;height:14px;background:#b3bdca;"></div>
<div class="a" style="left:448.9px;top:343.5px;width:1px;height:14px;background:#b3bdca;"></div>
<div class="a" style="left:513.1px;top:343.5px;width:1px;height:14px;background:#b3bdca;"></div>
<div class="a" style="left:624.5px;top:343.5px;width:1px;height:14px;background:#b3bdca;"></div>
<svg style="left:258px;top:344.7px" width="12" height="12.3" viewBox="0 0 12 12.3"><rect x=".5" y=".5" width="11" height="11.300" fill="#f3f3f3" stroke="#8b8b8b" stroke-width=".9"/><path d="M.5 3.300H11.500M.5 6.100H11.500M.5 8.900H11.500" stroke="#9aa3b0" stroke-width=".7"/><rect x="4" y=".3" width="4" height="11.700" fill="#fbd84c" stroke="#e0a030" stroke-width=".7"/></svg>
<svg style="left:283px;top:345.5px" width="14.5" height="11.5" viewBox="0 0 14.5 11.5"><path d="M0 5.600L3.500 .6 7 5.600H5.200Q5.200 9 8 11.300Q2 10.500 1.900 5.600Z" fill="#4a96de"/><path d="M14.500 5.900L11 10.900 7.500 5.900H9.300Q9.300 2.500 6.500 .2Q12.500 1 12.600 5.900Z" fill="#2f84d6"/></svg>
<div class="a" style="left:355.9px;top:341.5px;width:88.8px;height:17.5px;background:#fff;border:1px solid #a5a5a5;border-top-color:#7d7d7d;border-left-color:#8a8a8a;"></div>
<svg style="left:490px;top:343.4px" width="16" height="14.5" viewBox="0 0 16 14.5"><rect x=".4" y=".4" width="10.500" height="9.500" fill="#f2f2f2" stroke="#a6a6a6" stroke-width=".8"/><path d="M.4 3.500H11M.4 6.600H11M4 .4V10M7.500 .4V10" stroke="#a6a6a6" stroke-width=".8"/><rect x="5.800" y="5" width="9.800" height="9.200" rx=".8" fill="#4f7fb3" stroke="#3b6596" stroke-width=".7"/><rect x="7.600" y="5.400" width="5.800" height="3.600" fill="#eef2f7"/><rect x="8" y="10.800" width="5" height="3.200" fill="#dfe6ee"/></svg>
<svg style="left:604.5px;top:346px" width="10.5" height="10.5" viewBox="0 0 10.5 10.5"><path d="M0 .5H10.500M0 10H10.500" stroke="#444" stroke-width="1"/><path d="M2.200 1.800V8.800M.6 3.500L2.200 1.800 3.800 3.500M.6 7.100L2.200 8.800 3.800 7.100" stroke="#2b5c99" stroke-width="1" fill="none"/><text x="4.800" y="8.800" font-size="8" fill="#444" font-family="Liberation Sans">A</text></svg>
<svg style="left:709.5px;top:344px" width="15.5" height="10.5" viewBox="0 0 15.5 10.5"><rect x=".4" y=".4" width="10.500" height="9.500" fill="#f3f3f3" stroke="#9a9a9a" stroke-width=".8"/><path d="M.4 3.500H11M.4 6.600H11M4 .4V10M7.500 .4V10" stroke="#9a9a9a" stroke-width=".8"/><rect x=".4" y=".4" width="10.500" height="1.800" fill="#8a8a8a"/><path d="M9 5.300H12V3.300L15.300 6.300 12 9.300V7.300H9Z" fill="#3f86d2" stroke="#2b66ad" stroke-width=".5"/></svg>
<div class="a" style="left:187.3px;top:361.6px;width:308.1px;height:17.8px;background:#fff;"></div>
<div class="a" style="left:210.5px;top:395px;width:284.9px;height:14.2px;background:#eef3fb;"></div>
<div class="a" style="left:187.3px;top:361.6px;width:1px;height:47.6px;background:#9a9a9a;"></div>
<div class="a" style="left:187.3px;top:378.7px;width:308.1px;height:0.9px;background:#9c9c9c;"></div>
<div class="a" style="left:187.3px;top:361.2px;width:308.1px;height:0.8px;background:#c8c8c8;"></div>
<div class="a" style="left:209.5px;top:361.6px;width:1px;height:17.8px;background:#d0d0d0;"></div>
<div class="a" style="left:316.9px;top:361.6px;width:1px;height:17.8px;background:#d0d0d0;"></div>
<div class="a" style="left:400.1px;top:361.6px;width:1px;height:17.8px;background:#d0d0d0;"></div>
<div class="a" style="left:494.9px;top:361.6px;width:1px;height:17.8px;background:#e2e2e2;"></div>
<div class="a" style="left:209.5px;top:379.6px;width:1px;height:29.6px;background:#a9a9a9;"></div>
<div class="a" style="left:316.9px;top:379.6px;width:1px;height:29.6px;background:#fff;"></div>
<div class="a" style="left:400.1px;top:379.6px;width:1px;height:29.6px;background:#fff;"></div>
<div class="a" style="left:188.3px;top:394.4px;width:21.7px;height:0.8px;background:#c4c4c4;"></div>
<div class="a" style="left:188.3px;top:408.8px;width:21.7px;height:0.7px;background:#c4c4c4;"></div>
<svg style="left:192.6px;top:384.5px" width="5.6" height="7.7" viewBox="0 0 5.6 7.7"><path d="M0 0L5.600 3.850 0 7.700Z" fill="#3c3c3c"/></svg>
<svg style="left:256.5px;top:463.7px" width="6" height="6" viewBox="0 0 6 6"><path d="M.3 .3L5.700 5.700M5.700 .3L.3 5.700" stroke="#555" stroke-width="1" fill="none"/></svg>
<svg style="left:942.3px;top:461.3px" width="8.7" height="8.4" viewBox="0 0 8.7 8.4"><circle cx="4.350" cy="4.350" r="4.350" fill="#2b7fd6"/><rect x="3.500" y="1.500" width="1.700" height="3.800" fill="#fff"/><rect x="3.500" y="6" width="1.700" height="1.500" fill="#fff"/></svg>
<div class="a" style="left:1012.2px;top:95px;width:10.8px;height:18.5px;background:#e8e8e8;"></div>
<div class="a" style="left:1012.2px;top:113.5px;width:10.8px;height:24.8px;background:#f4f4f6;"></div>
<div class="a" style="left:1012.2px;top:138.3px;width:10.8px;height:331.4px;background:#fff;"></div>
<div class="a" style="left:1021.5px;top:174.2px;width:1.5px;height:2.8px;background:#e8a83a;"></div>
<div class="a" style="left:187px;top:475px;width:836px;height:18.5px;background:#e6e6e6;"></div>
<div class="dots" style="left:227px;top:481.700px;width:796px;height:5.600px"></div>
<div class="a" style="left:187px;top:493.5px;width:836px;height:133.5px;background:#f4f4f6;"></div>
<div class="a" style="left:212.3px;top:497.6px;width:133.7px;height:17.9px;background:#fff;"></div>
<div class="a" style="left:336px;top:498.2px;width:10px;height:16.8px;background:#efefef;"></div>
<svg style="left:338.3px;top:505px" width="4.8" height="2.8" viewBox="0 0 4.8 2.8"><path d="M0 0H4.800L2.400 2.800Z" fill="#222"/></svg>
<svg style="left:194px;top:500px" width="12.5" height="13.2" viewBox="0 0 12.5 13.2"><rect x="3.500" y=".5" width="8" height="9.500" fill="#f6f6f6" stroke="#5a5a5a" stroke-width=".8"/><rect x="2" y="1.900" width="8" height="9.500" fill="#f6f6f6" stroke="#5a5a5a" stroke-width=".8"/><rect x=".5" y="3.300" width="8" height="9.500" fill="#fff" stroke="#4a4a4a" stroke-width=".9"/></svg>
<div class="a" style="left:187px;top:518px;width:836px;height:109px;background:#fff;"></div>
<div class="a" style="left:187px;top:535px;width:836px;height:18.8px;background:#eef3fc;"></div>
<div class="a" style="left:187px;top:574px;width:836px;height:18.8px;background:#eef3fc;"></div>
<div class="a" style="left:205.8px;top:518.5px;width:1px;height:15.3px;background:#dcdcdc;"></div>
<div class="a" style="left:205.7px;top:533.8px;width:1.2px;height:78.7px;background:#fff;"></div>
<div class="a" style="left:238.1px;top:518.5px;width:1px;height:15.3px;background:#dcdcdc;"></div>
<div class="a" style="left:238px;top:533.8px;width:1.2px;height:78.7px;background:#fff;"></div>
<div class="a" style="left:284px;top:518.5px;width:1px;height:15.3px;background:#dcdcdc;"></div>
<div class="a" style="left:283.9px;top:533.8px;width:1.2px;height:78.7px;background:#fff;"></div>
<div class="a" style="left:691.8px;top:518.5px;width:1px;height:15.3px;background:#dcdcdc;"></div>
<div class="a" style="left:691.7px;top:533.8px;width:1.2px;height:78.7px;background:#fff;"></div>
<svg style="left:191.5px;top:539.4px" width="10" height="10" viewBox="0 0 10 10"><circle cx="5" cy="5" r="5" fill="#c4161c"/><circle cx="5" cy="5" r="4.200" fill="none" stroke="#fff" stroke-opacity=".25" stroke-width=".6"/><path d="M3.200 3.200L6.800 6.800M6.800 3.200L3.200 6.800" stroke="#fff" stroke-width="1.500"/></svg>
<svg style="left:191.5px;top:559px" width="10" height="10" viewBox="0 0 10 10"><circle cx="5" cy="5" r="5" fill="#c4161c"/><circle cx="5" cy="5" r="4.200" fill="none" stroke="#fff" stroke-opacity=".25" stroke-width=".6"/><path d="M3.200 3.200L6.800 6.800M6.800 3.200L3.200 6.800" stroke="#fff" stroke-width="1.500"/></svg>
<svg style="left:191.5px;top:578.5px" width="10" height="10" viewBox="0 0 10 10"><circle cx="5" cy="5" r="5" fill="#1fa03a"/><circle cx="5" cy="5" r="4.200" fill="none" stroke="#fff" stroke-opacity=".25" stroke-width=".6"/><path d="M2.700 5.200L4.400 6.900 7.400 3.500" stroke="#fff" stroke-width="1.500" fill="none"/></svg>
<svg style="left:191.5px;top:598px" width="10" height="10" viewBox="0 0 10 10"><circle cx="5" cy="5" r="5" fill="#1fa03a"/><circle cx="5" cy="5" r="4.200" fill="none" stroke="#fff" stroke-opacity=".25" stroke-width=".6"/><path d="M2.700 5.200L4.400 6.900 7.400 3.500" stroke="#fff" stroke-width="1.500" fill="none"/></svg>
<div class="a" style="left:882.3px;top:542px;width:1px;height:5px;background:#f6e6c8;"></div>
<div class="a" style="left:882.3px;top:562px;width:1px;height:5px;background:#f6e6c8;"></div>
<div class="a" style="left:883.3px;top:505.3px;width:139.7px;height:135px;background:#e4e4e4;"></div>
<svg style="left:898px;top:522.6px" width="13.5" height="13.5" viewBox="0 0 13.5 13.5"><path d="M.3 13.300C1.800 9.500 5.500 4 12.600 .4C12.900 3 11.800 5.800 9 8.200C6.500 10.300 3.800 11 2 11.600Z" fill="#a460c9"/><path d="M3.500 9.500L8.800 5.200" stroke="#d9b6ec" stroke-width="1.100" stroke-linecap="round"/></svg>
<div class="a" style="left:0px;top:652px;width:1023px;height:3px;background:#e6e4e8;"></div>
<div class="a" style="left:0px;top:652px;width:44px;height:3px;background:#dadfe6;"></div>
<div class="a" style="left:44px;top:652.6px;width:256px;height:2.4px;background:#fff;"></div>
<div class="a" style="left:44px;top:652px;width:256px;height:0.7px;background:#cfcfcf;"></div>
<div class="a" style="left:300px;top:652.6px;width:140px;height:2.4px;background:#e6e2e6;"></div>
<div class="a" style="left:440px;top:652.6px;width:37px;height:2.4px;background:#f3ecd6;"></div>
<div class="a" style="left:477px;top:652.6px;width:42px;height:2.4px;background:#f6f6f6;"></div>
<div class="a" style="left:519px;top:652.6px;width:81px;height:2.4px;background:#f1ead9;"></div>
<div class="a" style="left:600px;top:652.6px;width:423px;height:2.4px;background:#e3e4ea;"></div>
<div class="a" style="left:300px;top:652px;width:723px;height:0.7px;background:#d9d9dc;"></div>
<div class="t" style="left:21.00px;top:0.40px;font-size:11.5px;color:#1c1c1c;transform:scaleX(0.9084);">MySQL Workbench</div>
<div class="t" style="left:49.00px;top:22.90px;font-size:11px;color:#333;transform:scaleX(0.9312);">mysql clinica neo</div>
<div class="t" style="left:7.50px;top:43.00px;font-size:11px;color:#262626;transform:scaleX(0.9304);">File</div>
<div class="t" style="left:39.40px;top:43.00px;font-size:11px;color:#262626;transform:scaleX(0.9278);">Edit</div>
<div class="t" style="left:72.60px;top:43.00px;font-size:11px;color:#262626;transform:scaleX(0.9046);">View</div>
<div class="t" style="left:109.00px;top:43.00px;font-size:11px;color:#262626;transform:scaleX(0.9343);">Query</div>
<div class="t" style="left:152.60px;top:43.00px;font-size:11px;color:#262626;transform:scaleX(0.8940);">Database</div>
<div class="t" style="left:209.70px;top:43.00px;font-size:11px;color:#262626;transform:scaleX(0.8980);">Server</div>
<div class="t" style="left:255.70px;top:43.00px;font-size:11px;color:#262626;transform:scaleX(0.9343);">Tools</div>
<div class="t" style="left:295.00px;top:43.00px;font-size:11px;color:#262626;transform:scaleX(0.9113);">Scripting</div>
<div class="t" style="left:349.50px;top:43.00px;font-size:11px;color:#262626;transform:scaleX(0.8972);">Help</div>
<div class="t" style="left:11.50px;top:94.20px;font-size:10px;color:#8a8a8a;transform:scaleX(1.0464);">Navigator</div>
<div class="t" style="left:11.00px;top:114.00px;font-size:9.8px;color:#262626;transform:scaleX(0.9388);font-weight:bold;">SCHEMAS</div>
<div class="t" style="left:27.00px;top:133.70px;font-size:10px;color:#8c8c8c;transform:scaleX(0.9614);">Filter objects</div>
<div class="t" style="left:41.00px;top:155.00px;font-size:10px;color:#262626;transform:scaleX(0.9955);font-weight:bold;">clinica</div>
<div class="t" style="left:59.00px;top:169.50px;font-size:10px;color:#1a1a1a;">Tables</div>
<div class="t" style="left:59.00px;top:298.20px;font-size:10px;color:#1a1a1a;transform:scaleX(0.9585);">Views</div>
<div class="t" style="left:59.00px;top:312.60px;font-size:10px;color:#1a1a1a;transform:scaleX(0.9833);">Stored Procedures</div>
<div class="t" style="left:59.00px;top:327.00px;font-size:10px;color:#1a1a1a;transform:scaleX(0.9733);">Functions</div>
<div class="t" style="left:41.00px;top:341.50px;font-size:10px;color:#1a1a1a;transform:scaleX(1.0333);">sys</div>
<div class="t" style="left:11.60px;top:424.10px;font-size:10px;color:#333;transform:scaleX(1.0401);">Administration</div>
<div class="t" style="left:91.00px;top:424.10px;font-size:10px;color:#2b7cc9;transform:scaleX(0.9115);">Schemas</div>
<div class="t" style="left:12.20px;top:447.00px;font-size:10px;color:#8a8a8a;transform:scaleX(1.0573);">Information</div>
<div class="t" style="left:26.00px;top:483.60px;font-size:11px;color:#262626;transform:scaleX(1.0391);font-weight:bold;">No object selected</div>
<div class="t" style="left:12.00px;top:608.60px;font-size:10px;color:#2b7cc9;transform:scaleX(1.0339);">Object Info</div>
<div class="t" style="left:76.00px;top:608.60px;font-size:10px;color:#333;transform:scaleX(0.9838);">Session</div>
<div class="t" style="left:4.00px;top:632.70px;font-size:11px;color:#333;transform:scaleX(0.9685);">Query Completed</div>
<div class="t" style="left:193.60px;top:92.00px;font-size:11px;color:#fff;transform:scaleX(0.8942);">Query 1</div>
<div class="t" style="left:1018.60px;top:94.80px;font-size:10px;color:#8a8a8a;">S</div>
<div class="t" style="left:210.00px;top:138.00px;font-size:10.4px;color:#4a90d6;font-family:'Liberation Mono',monospace;">1</div>
<div class="t" style="left:463.00px;top:115.90px;font-size:11px;color:#262626;transform:scaleX(0.8458);">Limit to 1000 rows</div>
<div class="t" style="left:197.30px;top:341.80px;font-size:9.3px;color:#333;transform:scaleX(0.9719);font-weight:bold;">Result Grid</div>
<div class="t" style="left:304.60px;top:341.90px;font-size:9.5px;color:#444;transform:scaleX(0.9251);">Filter Rows:</div>
<div class="t" style="left:453.50px;top:341.90px;font-size:9.5px;color:#444;transform:scaleX(0.9798);">Export:</div>
<div class="t" style="left:518.00px;top:341.90px;font-size:9.5px;color:#444;transform:scaleX(0.9614);">Wrap Cell Content:</div>
<div class="t" style="left:630.00px;top:341.90px;font-size:9.5px;color:#444;transform:scaleX(0.9570);">Fetch rows:</div>
<div class="t" style="left:217.00px;top:360.80px;font-size:10px;color:#222;transform:scaleX(0.9628);">fecha_carga</div>
<div class="t" style="left:323.60px;top:360.80px;font-size:10px;color:#222;transform:scaleX(0.9468);">nombre_tabla</div>
<div class="t" style="left:407.00px;top:360.80px;font-size:10px;color:#222;transform:scaleX(0.9753);">cantidad_registros</div>
<div class="t" style="left:213.20px;top:378.20px;font-size:10px;color:#262626;transform:scaleX(0.9951);">2023-05-14 16:02:34</div>
<div class="t" style="left:320.20px;top:378.20px;font-size:10px;color:#262626;transform:scaleX(0.9540);">Datos_contacto</div>
<div class="t" style="left:404.00px;top:378.20px;font-size:10px;color:#262626;transform:scaleX(0.9408);">215</div>
<div class="t" style="left:213.20px;top:393.30px;font-size:10px;color:#262626;transform:scaleX(0.9951);">2023-05-14 18:10:52</div>
<div class="t" style="left:320.20px;top:393.30px;font-size:10px;color:#262626;transform:scaleX(0.9540);">Datos_contacto</div>
<div class="t" style="left:404.00px;top:393.30px;font-size:10px;color:#262626;transform:scaleX(0.9408);">215</div>
<div class="t" style="left:970.50px;top:370.80px;font-size:8.2px;color:#fff;transform:scaleX(1.0121);">Result</div>
<div class="t" style="left:974.00px;top:379.30px;font-size:8.2px;color:#fff;transform:scaleX(1.0990);">Grid</div>
<div class="t" style="left:193.50px;top:474.90px;font-size:10px;color:#8a8a8a;transform:scaleX(0.9723);">Output</div>
<div class="t" style="left:216.00px;top:496.80px;font-size:11px;color:#262626;transform:scaleX(0.8596);">Action Output</div>
<div class="t" style="left:212.80px;top:516.70px;font-size:9px;color:#222;">#</div>
<div class="t" style="left:244.70px;top:516.70px;font-size:9px;color:#222;transform:scaleX(0.9303);">Time</div>
<div class="t" style="left:290.70px;top:516.70px;font-size:9px;color:#222;transform:scaleX(0.9714);">Action</div>
<div class="t" style="left:699.00px;top:516.70px;font-size:9px;color:#222;transform:scaleX(0.9225);">Message</div>
<div class="t" style="left:229.50px;top:532.30px;font-size:11px;color:#262626;transform:scaleX(0.8653);">2</div>
<div class="t" style="left:242.50px;top:532.30px;font-size:11px;color:#262626;transform:scaleX(0.8522);">17:10:25</div>
<div class="t" style="left:287.00px;top:532.30px;font-size:11px;color:#262626;transform:scaleX(0.8640);">select * from log_tablas where row_number &lt; 2 LIMIT 0, 1000</div>
<div class="t" style="left:696.60px;top:532.30px;font-size:11px;color:#262626;transform:scaleX(0.8575);">Error Code: 1064. You have an error in your</div>
<div class="t" style="left:229.50px;top:552.00px;font-size:11px;color:#262626;transform:scaleX(0.8653);">3</div>
<div class="t" style="left:242.50px;top:552.00px;font-size:11px;color:#262626;transform:scaleX(0.8522);">17:10:29</div>
<div class="t" style="left:287.00px;top:552.00px;font-size:11px;color:#262626;transform:scaleX(0.8640);">select * from log_tablas where row_number &lt; 2 LIMIT 0, 1000</div>
<div class="t" style="left:696.60px;top:552.00px;font-size:11px;color:#262626;transform:scaleX(0.8575);">Error Code: 1064. You have an error in your</div>
<div class="t" style="left:229.50px;top:571.70px;font-size:11px;color:#262626;transform:scaleX(0.8653);">4</div>
<div class="t" style="left:242.50px;top:571.70px;font-size:11px;color:#262626;transform:scaleX(0.8687);">17:11:04</div>
<div class="t" style="left:287.00px;top:571.70px;font-size:11px;color:#262626;transform:scaleX(0.8479);">select * from log_tablas limit 2</div>
<div class="t" style="left:696.60px;top:571.70px;font-size:11px;color:#262626;transform:scaleX(0.8285);">2 row(s) returned</div>
<div class="t" style="left:229.50px;top:591.50px;font-size:11px;color:#262626;transform:scaleX(0.8653);">5</div>
<div class="t" style="left:242.50px;top:591.50px;font-size:11px;color:#262626;transform:scaleX(0.8687);">17:11:13</div>
<div class="t" style="left:287.00px;top:591.50px;font-size:11px;color:#262626;transform:scaleX(0.8479);">select * from log_tablas limit 2</div>
<div class="t" style="left:696.60px;top:591.50px;font-size:11px;color:#262626;transform:scaleX(0.8285);">2 row(s) returned</div>
<div class="t" style="left:919.70px;top:518.90px;font-size:11px;color:#303030;transform:scaleX(0.9696);">Lightshot</div>
<div class="t" style="left:898.00px;top:550.00px;font-size:13px;color:#262626;transform:scaleX(0.9558);font-weight:bold;">Lightshot</div>
<div class="t" style="left:898.00px;top:568.40px;font-size:13px;color:#6e6e6e;transform:scaleX(1.0073);">Captura de pantalla s</div>
<div class="t" style="left:898.00px;top:586.50px;font-size:13px;color:#6e6e6e;transform:scaleX(1.0104);">workbench.png. Haga</div>
<div class="t" style="left:898.00px;top:603.60px;font-size:13px;color:#6e6e6e;transform:scaleX(0.9705);">carpeta.</div>
<div class="t" style="left:250.60px;top:138.00px;font-size:10.6px;color:#0f70cc;transform:scaleX(0.9635);font-family:'Liberation Mono',monospace;-webkit-text-stroke:0.25px #0f70cc;">select</div>
<div class="t" style="left:294.19px;top:138.00px;font-size:10.6px;color:#3c5a7a;transform:scaleX(0.8848);font-family:'Liberation Mono',monospace;-webkit-text-stroke:0.25px #3c5a7a;">*</div>
<div class="t" style="left:306.64px;top:138.00px;font-size:10.6px;color:#0f70cc;transform:scaleX(0.9556);font-family:'Liberation Mono',monospace;-webkit-text-stroke:0.25px #0f70cc;">from</div>
<div class="t" style="left:337.78px;top:138.00px;font-size:10.6px;color:#2f3542;transform:scaleX(0.9700);font-family:'Liberation Mono',monospace;-webkit-text-stroke:0.25px #2f3542;">log_tablas</div>
<div class="t" style="left:406.27px;top:138.00px;font-size:10.6px;color:#0f70cc;transform:scaleX(0.9603);font-family:'Liberation Mono',monospace;-webkit-text-stroke:0.25px #0f70cc;">limit</div>
<div class="t" style="left:443.64px;top:138.00px;font-size:10.6px;color:#b5793a;transform:scaleX(0.8848);font-family:'Liberation Mono',monospace;-webkit-text-stroke:0.25px #b5793a;">2</div>
<div class="t" style="left:449.86px;top:138.00px;font-size:10.6px;color:#2f3542;transform:scaleX(0.8848);font-family:'Liberation Mono',monospace;-webkit-text-stroke:0.25px #2f3542;">;</div>
<div class="t" style="left:193.50px;top:456.50px;font-size:10px;color:#2b7cc9;transform:scaleX(1.0830);height:13.20px;overflow:hidden;">log_tablas3</div>
<div class="t" style="left:959.60px;top:457.30px;font-size:11px;color:#222;transform:scaleX(0.8541);height:12.40px;overflow:hidden;">Read Only</div>
<div class="t" style="left:1019.00px;top:450.60px;font-size:9px;color:#2b7cc9;">C</div>
</body>
</html>
